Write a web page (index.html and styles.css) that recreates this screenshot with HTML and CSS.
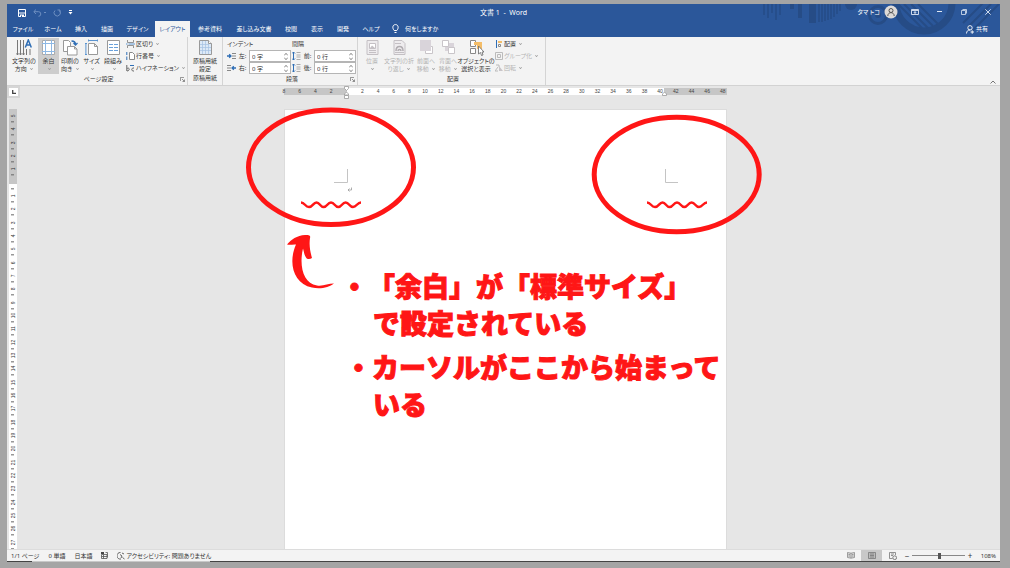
FILE: index.html
```html
<!DOCTYPE html>
<html lang="ja">
<head>
<meta charset="utf-8">
<title>文書 1 - Word</title>
<link rel="stylesheet" href="styles.css">
</head>
<body>
<div class="window">
  <header class="top">
    <svg class="decor" width="240" height="33" viewBox="760 4 240 33" aria-hidden="true">
      <g fill="none" stroke="#264c86">
        <path stroke-width="1.5" d="M764 4v11M768 4v14M772 4v9M776 4v16M780 4v11"/>
        <path stroke-width="4" d="M792 4v5M800 4v14"/>
        <path stroke-width="7" d="M812.500 4v19"/>
        <path stroke-width="1.500" d="M819 4v18M822 4v18M825 4v17M828 4v16M831 4v15M834 4v13M837 4v10M840 4v7"/>
        <circle cx="878" cy="15" r="8.500" stroke-width="3"/>
        <circle cx="924" cy="3" r="28" stroke-width="7"/>
        <path stroke-width="2" d="M898 4l24 24M904 4l24 24M911 4l22 22M918 4l20 20M967 28l24-24M972 31l27-27M963 23l20-20"/>
      </g>
      <g fill="#264c86"><circle cx="851" cy="4" r="6"/><circle cx="878" cy="15" r="3"/></g>
    </svg>
    <div class="titlebar">
      <div class="quick">
        <button class="plain" aria-label="上書き保存"><svg width="8" height="8" viewBox="0 0 8 8"><path fill="none" stroke="#fff" d="M.5.5h7v7h-7z"/><path fill="#fff" d="M1 3.500h6v1H1zM2 5.500h4V8H2z"/><path fill="#2b579a" d="M3 6.500h1V8H3z"/></svg></button>
        <button class="plain dim" aria-label="元に戻す"><svg width="13" height="8" viewBox="0 0 13 8"><path fill="none" stroke="#6e8fc0" d="M3 .5L.8 2.700 3 5M1 2.700h4.500a2.300 2.300 0 0 1 0 4.600M11 3l1 1 1-1"/></svg></button>
        <button class="plain dim" aria-label="やり直し"><svg width="8" height="8" viewBox="0 0 8 8"><path fill="none" stroke="#6e8fc0" d="M4.500 1H7v2.500M6.500 1.500A3.200 3.200 0 1 1 2 1.500"/></svg></button>
        <button class="plain" aria-label="カスタマイズ"><svg width="5" height="5" viewBox="0 0 5 5"><path fill="#fff" d="M1 0h3v1H1zM.5 2h4L2.500 4.500z"/></svg></button>
      </div>
      <h1 class="title">文書 1&nbsp; -&nbsp; Word</h1>
      <div class="account">
        <span>タマ トコ</span>
        <svg width="14" height="14" viewBox="0 0 14 14"><circle cx="7" cy="7" r="6.500" fill="#dedbd8"/><g fill="none" stroke="#555"><circle cx="7" cy="5.500" r="2"/><path d="M3.800 11c0-4.500 6.400-4.500 6.400 0"/></g></svg>
        <button class="plain" aria-label="リボンの表示オプション"><svg width="8" height="6" viewBox="0 0 8 6"><path fill="none" stroke="#dfe7f3" stroke-width=".9" d="M.5.5h7v5h-7zM1 1.500h6M4 5V2.500M2.700 4L4 2.700 5.300 4"/></svg></button>
        <button class="plain" aria-label="最小化"><svg width="6" height="6" viewBox="0 0 6 6"><path stroke="#dfe7f3" d="M0 2.500h5"/></svg></button>
        <button class="plain" aria-label="元のサイズ"><svg width="6" height="6" viewBox="0 0 6 6"><path fill="none" stroke="#dfe7f3" stroke-width=".8" d="M.5 1.500h4v4h-4zM1.500.5h4v4"/></svg></button>
        <button class="plain" aria-label="閉じる"><svg width="6" height="6" viewBox="0 0 6 6"><path stroke="#dfe7f3" stroke-width=".9" d="M.3.3l5.400 5.400M5.700.3L.3 5.700"/></svg></button>
      </div>
    </div>
    <nav class="tabs">
      <button class="tab m">ファイル</button><button class="tab m">ホーム</button><button class="tab">挿入</button><button class="tab">描画</button><button class="tab l">デザイン</button><button class="tab l active">レイアウト</button><button class="tab xl">参考資料</button><button class="tab xxl">差し込み文書</button><button class="tab">校閲</button><button class="tab">表示</button><button class="tab">開発</button><button class="tab m">ヘルプ</button>
      <button class="tell"><svg width="7" height="10" viewBox="0 0 7 10"><path fill="none" stroke="#fff" d="M2.200 6.500C.2 4.500.3.600 3.500.600S6.800 4.500 4.800 6.500zM2.500 8.500h2"/></svg>何をしますか</button>
      <button class="share"><svg width="8" height="9" viewBox="0 0 8 9"><g fill="none" stroke="#fff" stroke-width=".9"><circle cx="4" cy="2.800" r="2.200"/><path d="M.5 8.500C.6 6 2 5 4 5M4.500 7H8M6.200 5.300v3.500"/></g></svg>共有</button>
    </nav>
  </header>

  <section class="ribbon">
    <div class="group g-page">
      <div class="tools">
        <button class="big w28"><svg width="16" height="17" viewBox="0 0 16 17"><path stroke="#777" fill="none" d="M1.500 1v15M4.500 1v15M7.500 1v15M10.500 10v6M14 10v6M.5 14.500l1 1.500 1-1.500M3.500 14.500l1 1.500 1-1.500M6.500 14.500l1 1.500 1-1.500"/><path stroke="#2f6eb5" stroke-width="1.500" fill="none" d="M9.300 8.500L12.300 1l3 7.500M10.300 6h4"/></svg><span>文字列の<br>方向 <i class="ar"></i></span></button>
        <button class="big w21 on"><svg width="13" height="17" viewBox="0 0 13 17"><path fill="#fff" stroke="#aaa" d="M.5 1.500h12v14H.5z"/><path stroke="#8db8e4" d="M3.500 1v15M9.500 1v15M0 4.500h13M0 12.500h13"/></svg><span>余白<br><i class="ar"></i></span></button>
        <button class="big w22"><svg width="16" height="17" viewBox="0 0 16 17"><path fill="#fff" stroke="#999" d="M1.500 1.500h5l2 2v9h-7z"/><path fill="#fff" stroke="#999" d="M5.500 7.500h7l2.500 2.500v6H5.500zM12.500 7.500V10H15"/><path fill="none" stroke="#2f6eb5" stroke-width="1.300" d="M9.500 2c3 0 4 .8 4 3.500M11.500 4l2 2 2-2"/></svg><span>印刷の<br>向き <i class="ar"></i></span></button>
        <button class="big w21"><svg width="13" height="17" viewBox="0 0 13 17"><path fill="#fff" stroke="#999" d="M3.500 4.500h6l3 3v8h-9zM9.500 4.500v3h3"/><path fill="none" stroke="#5b94d0" d="M3 1.500h10M3.500.5v2M12.500.5v2M.9 4v12M0 4.500h2M0 15.500h2"/></svg><span>サイズ<br><i class="ar"></i></span></button>
        <button class="big w22"><svg width="13" height="17" viewBox="0 0 13 17"><path fill="#fff" stroke="#999" d="M.5 1.500h12v14H.5z"/><path stroke="#6aa1da" d="M2 5.500h4M7 5.500h4M2 8.500h4M7 8.500h4M2 11.500h4M7 11.500h4"/></svg><span>段組み<br><i class="ar"></i></span></button>
        <div class="small">
          <button><svg width="9" height="8" viewBox="0 0 9 8"><path fill="none" stroke="#888" stroke-width=".9" d="M1.500 0v2.500h6V0M1.500 8V5.500h6V8"/><path stroke="#5b94d0" d="M0 4h1.500M2.500 4H9"/></svg>区切り <i class="ar"></i></button>
          <button><svg width="9" height="8" viewBox="0 0 9 8"><path fill="#fff" stroke="#888" d="M3.500.5h3l2 2v5h-5z"/><path stroke="#2f6eb5" d="M.8 0v3M.8 4.500v3.500"/></svg>行番号 <i class="ar"></i></button>
          <button><svg width="9" height="8" viewBox="0 0 9 8"><path fill="none" stroke="#666" d="M.8 1v6M1 4.500c3-1.500 3 2.500 0 2.500M8 4C5 3.500 5 7.500 8 7"/><path stroke="#2f6eb5" d="M4 1.500h4"/></svg>ハイフネーション <i class="ar"></i></button>
        </div>
      </div>
      <div class="caption">ページ設定<svg class="launch" width="5" height="5" viewBox="0 0 5 5"><path fill="none" stroke="#777" stroke-width=".8" d="M.4 4V.4H4M2 2l2.500 2.500M4.500 2.500v2h-2"/></svg></div>
    </div>
    <div class="group g-paper">
      <div class="tools"><button class="big w35"><svg width="13" height="17" viewBox="0 0 13 17"><path fill="#dce9f7" stroke="#999" d="M.5 1.500h9l3 3v11H.5z"/><path stroke="#a3c1e3" stroke-width=".7" d="M1 5.500h9M1 8.500h11M1 11.500h11M3.500 2v13M6.500 2v13M9.500 5v10"/><path fill="#fff" stroke="#999" d="M9.500 1.500v3h3"/></svg><span>原稿用紙<br>設定</span></button></div>
      <div class="caption">原稿用紙</div>
    </div>
    <div class="group g-para">
      <div class="tools fields">
        <div class="col"><b>インデント</b>
          <div class="field"><svg width="9" height="8" viewBox="0 0 9 8"><path stroke="#888" d="M5 1.500h4M5 4h4M5 6.500h4"/><path fill="none" stroke="#2f6eb5" stroke-width="1.300" d="M0 4h4M2.200 2.200L4 4 2.200 5.800"/></svg><label for="il">左:</label><span class="spin"><input id="il" value="0 字"><i></i></span></div>
          <div class="field"><svg width="9" height="8" viewBox="0 0 9 8"><path stroke="#888" d="M0 1.500h4M0 4h4M0 6.500h4"/><path fill="none" stroke="#2f6eb5" stroke-width="1.300" d="M5 4h4M6.800 2.200L5 4l1.800 1.800"/></svg><label for="ir">右:</label><span class="spin"><input id="ir" value="0 字"><i></i></span></div>
        </div>
        <div class="col"><b>間隔</b>
          <div class="field"><svg width="9" height="8" viewBox="0 0 9 8"><path stroke="#999" stroke-width=".8" d="M4.500 .5h4M4.500 3h4M4.500 5h4M4.500 7.500h4"/><path fill="none" stroke="#2f6eb5" d="M1.500 0v8M0 1.500L1.500 0 3 1.500M0 6.500L1.500 8 3 6.500"/></svg><label for="sb">前:</label><span class="spin"><input id="sb" value="0 行"><i></i></span></div>
          <div class="field"><svg width="9" height="8" viewBox="0 0 9 8"><path stroke="#999" stroke-width=".8" d="M4.500 .5h4M4.500 3h4M4.500 5h4M4.500 7.500h4"/><path fill="none" stroke="#2f6eb5" d="M1.500 0v8M0 1.500L1.500 0 3 1.500M0 6.500L1.500 8 3 6.500"/></svg><label for="sa">後:</label><span class="spin"><input id="sa" value="0 行"><i></i></span></div>
        </div>
      </div>
      <div class="caption">段落<svg class="launch" width="5" height="5" viewBox="0 0 5 5"><path fill="none" stroke="#777" stroke-width=".8" d="M.4 4V.4H4M2 2l2.500 2.500M4.500 2.500v2h-2"/></svg></div>
    </div>
    <div class="group g-arr">
      <div class="tools">
        <button class="big w22" disabled><svg width="13" height="17" viewBox="0 0 13 17"><path fill="#eeecee" stroke="#c4c0c4" d="M1 1.500h11v14H1z"/><path fill="#fff" stroke="#c4c0c4" d="M3.500 4.500h6v5h-6z"/><path fill="#c4c0c4" d="M4 9l2-2.500L9 9z"/><path stroke="#c4c0c4" d="M3 11.500h7M3 13.500h7"/></svg><span>位置<br><i class="ar"></i></span></button>
        <button class="big w32" disabled><svg width="13" height="17" viewBox="0 0 13 17"><path fill="#eeecee" stroke="#c4c0c4" d="M1 1.500h8l3 3v11H1z"/><path stroke="#c4c0c4" d="M2 4.500h6M2 13.500h9"/><path fill="none" stroke="#b0acb0" stroke-width="1.500" d="M3 12c0-6 7-6 7 0M5 12c0-2 3-2 3 0"/></svg><span>文字列の折<br>り返し <i class="ar"></i></span></button>
        <button class="big w22" disabled><svg width="15" height="17" viewBox="0 0 15 17"><path fill="#fff" stroke="#c9c5c9" d="M6.500 7.500h7v7h-7z"/><path fill="#d9d4da" d="M1 1h11v11H1z"/></svg><span>前面へ<br>移動 <i class="ar"></i></span></button>
        <button class="big w22" disabled><svg width="15" height="17" viewBox="0 0 15 17"><path fill="#d9d4da" d="M4 4h9v8H4z"/><path fill="#fff" stroke="#c9c5c9" d="M1.500 1.500h6v6h-6zM7.500 8.500h6v6h-6z"/></svg><span>背面へ<br>移動 <i class="ar"></i></span></button>
        <button class="big w34"><svg width="15" height="17" viewBox="0 0 15 17"><path fill="#fff" stroke="#888" d="M1.500 1.500h5v6h-5zM1.500 9.500h5v5h-5z"/><path fill="#f4bd68" d="M5 3h8v7H8V6H5z"/><path fill="#fff" stroke="#666" stroke-width=".8" d="M9.500 7v8l2-1.500 1 3 1.500-.5-1-3h2z"/></svg><span>オブジェクトの<br>選択と表示</span></button>
        <div class="small">
          <button><svg width="8" height="8" viewBox="0 0 8 8"><path stroke="#2f6eb5" d="M1.500 0v8"/><path fill="#f4bd68" d="M3 1h4v2H3z"/><path fill="#fff" stroke="#888" d="M3.500 4.500h2v2h-2z"/></svg>配置 <i class="ar"></i></button>
          <button disabled><svg width="8" height="8" viewBox="0 0 8 8"><path fill="none" stroke="#bbb" d="M.5.5h7v7h-7zM2.500 2.500h3v3h-3z"/></svg>グループ化 <i class="ar"></i></button>
          <button disabled><svg width="8" height="8" viewBox="0 0 8 8"><path fill="#c8c4c8" d="M4 2l4 5H4z"/><path fill="none" stroke="#bbb" d="M3 7H0l3-4M1 1h3v2"/></svg>回転 <i class="ar"></i></button>
        </div>
      </div>
      <div class="caption">配置</div>
    </div>
    <button class="plain collapse" aria-label="リボンを折りたたむ"><svg width="6" height="4" viewBox="0 0 6 4"><path fill="none" stroke="#777" d="M.5 3.500L3 1l2.500 2.500"/></svg></button>
  </section>

  <main class="work">
    <div class="rulerbar">
      <button class="tabsel" aria-label="タブの種類"><svg width="4" height="4" viewBox="0 0 4 4"><path fill="none" stroke="#444" stroke-width="1.300" d="M.7 0v3.300H4"/></svg></button>
      <div class="hruler">
        <div class="nums"><span>8</span><span>6</span><span>4</span><span>2</span><span></span><span>2</span><span>4</span><span>6</span><span>8</span><span>10</span><span>12</span><span>14</span><span>16</span><span>18</span><span>20</span><span>22</span><span>24</span><span>26</span><span>28</span><span>30</span><span>32</span><span>34</span><span>36</span><span>38</span><span>40</span><span>42</span><span>44</span><span>46</span><span>48</span></div>
        <svg class="mark first" width="5" height="14" viewBox="0 0 5 14"><path fill="#fff" stroke="#999" stroke-width=".8" d="M.5.5h4v2l-2 2-2-2zM.5 9V8l2-2 2 2v1zM.5 9.500h4v3h-4z"/></svg>
        <svg class="mark last" width="5" height="14" viewBox="0 0 5 14"><path fill="#fff" stroke="#999" stroke-width=".8" d="M.5 9.500V8l2-2 2 2v1.500z"/></svg>
      </div>
    </div>
    <div class="docrow">
      <div class="vruler"><span>5</span><span>4</span><span>3</span><span>2</span><span>1</span><span></span><span>1</span><span>2</span><span>3</span><span>4</span><span>5</span><span>6</span><span>7</span><span>8</span><span>9</span><span>10</span><span>11</span><span>12</span><span>13</span><span>14</span><span>15</span><span>16</span><span>17</span><span>18</span><span>19</span><span>20</span><span>21</span><span>22</span><span>23</span><span>24</span><span>25</span><span>26</span><span>27</span></div>
      <article class="paper">
        <svg class="marks" width="520" height="200" viewBox="244 100 520 200" aria-hidden="true">
          <path fill="none" stroke="#c4c4c4" d="M347.500 169v13.500H334M665.500 169v13.500H678"/>
          <path fill="none" stroke="#999" stroke-width=".8" d="M351.500 187.500v2.500h-3.500M349.500 188.500L348 190l1.500 1.500"/>
          <g fill="none" stroke="#ff1616" stroke-width="5">
            <ellipse cx="331" cy="167.300" rx="82.500" ry="57.300"/>
            <ellipse cx="676.700" cy="174.500" rx="82.500" ry="57.300"/>
            <g stroke-width="2.400"><path id="wave" d="M301 202.500c4 0 4 4.500 8 4.500s4-4.500 7.500-4.500 3.500 4.500 7.200 4.500 3.600-4.500 7.300-4.500 3.600 4.500 7.300 4.500 3.600-4.500 7.300-4.500 3.600 4.500 7.400 4.500 4-4.500 8-4.500"/><use href="#wave" x="346"/></g>
          </g>
          <path fill="#ff1616" d="M287 244.500c4-5 10-9 18-9.500 3 0 6 0 5 3-1 7 0 13 2 20-2 1.500-5 1.500-6-.5-2-3-2-6-3-9-4 17 0 35 14 37 6 1 11-2 17-2-5 4-14 6-22 4-19-4-24-25-16-43-3-.5-6 1-9 0z"/>
        </svg>
        <div class="notes">
          <p class="note">・「余白」が「標準サイズ」<br><span>で設定されている</span></p>
          <p class="note second">・カーソルがここから始まって<br><span>いる</span></p>
        </div>
      </article>
    </div>
  </main>

  <footer class="status">
    <span>1/1 ページ</span><span>0 単語</span><span>日本語</span>
    <svg width="7" height="7" viewBox="0 0 7 7"><path fill="none" stroke="#555" stroke-width=".8" d="M.5 2.500h5.500v4H.5zM.5 4.500H6M2.500 2.500v4M4.500.5h2v5"/><path fill="#444" d="M0 0h3v2H0z"/></svg>
    <span class="acc"><svg width="8" height="8" viewBox="0 0 8 8"><path fill="none" stroke="#555" stroke-width=".9" d="M3.500.5A3.300 3.300 0 1 0 4 7M5 1l2 1M3 2.500l2 1.500-1 2M5.500 5.500L7.500 7"/></svg>アクセシビリティ: 問題ありません</span>
    <div class="views">
      <button class="view" aria-label="閲覧モード"><svg width="8" height="7" viewBox="0 0 8 7"><path fill="#ddd" stroke="#888" stroke-width=".8" d="M.5.5L4 1.200 7.500.5v5L4 6.200.500 5.500zM4 1v5M1.500 2.500h1.500M1.500 4h1.500M5 2.500h1.500M5 4h1.500"/></svg></button>
      <button class="view on" aria-label="印刷レイアウト"><svg width="8" height="7" viewBox="0 0 8 7"><path fill="#bbb" stroke="#777" stroke-width=".8" d="M.5.5h7v6h-7zM2 2h4M2 3.500h4M2 5h4"/></svg></button>
      <button class="view" aria-label="Web レイアウト"><svg width="8" height="8" viewBox="0 0 8 8"><path fill="none" stroke="#777" stroke-width=".8" d="M3.500 6.500h-3v-6h6V3M2 2h3M2 3.500h2"/><circle cx="5.700" cy="5.700" r="1.900" fill="#eee" stroke="#666" stroke-width=".8"/></svg></button>
      <span class="pm">−</span><input class="zoom" type="range" min="0" max="100" value="52" aria-label="ズーム"><span class="pm">+</span><span class="pct">108%</span>
    </div>
  </footer>
</div>
</body>
</html>
```

FILE: styles.css
```css
* { box-sizing: border-box; }
body {
  margin: 0;
  padding: 4px 10px 6px 7px;
  min-height: 100vh;
  display: flex;
  background: #a5a5a5;
  color: #333;
  font: 6px/8px "Noto Sans", "Noto Sans CJK JP", sans-serif;
  font-feature-settings: "palt";
  overflow: hidden;
}
button, input {
  font: inherit;
  font-feature-settings: inherit;
  color: inherit;
  border: 0;
  padding: 0;
  margin: 0;
  background: none;
  border-radius: 0;
  white-space: nowrap;
}
svg { display: block; flex: none; }
.window { flex: 1; display: flex; flex-direction: column; min-width: 0; }

/* Title bar and tabs */
.top { position: relative; background: #2b579a; color: #fff; }
.decor { position: absolute; top: 0; right: 0; }
.titlebar {
  position: relative;
  display: grid;
  grid-template-columns: 1fr auto 1fr;
  align-items: center;
  height: 17px;
}
.quick { display: flex; align-items: center; gap: 7px; padding-left: 11px; }
.title { margin: 0; font-size: 7px; font-weight: 400; line-height: 16px; }
.account { display: flex; align-items: center; justify-content: flex-end; gap: 18px; height: 15px; margin-bottom: 2px; padding-right: 9px; }
.account > span { margin-right: -14px; }
.account > svg { margin-right: -5px; }
.tabs { position: relative; display: flex; height: 16px; }
.tab { width: 26px; }
.tab.m { width: 30px; }
.tab.l { width: 35px; }
.tab:first-child { margin-left: 1px; }
.tab.xl { width: 40px; }
.tab.xxl { width: 48px; }
.tab.active { background: #f3f3f3; color: #2b579a; }
.tell, .share { display: flex; align-items: center; gap: 6px; }
.tell { margin-left: 6px; }
.share { margin-left: auto; padding-right: 12px; gap: 2px; }

/* Ribbon */
.ribbon { display: flex; height: 49px; background: #f3f3f3; border-bottom: 1px solid #d2d2d2; }
.group { display: flex; flex-direction: column; padding: 1px 0 1px 3px; border-right: 1px solid #d4d4d4; }
.g-page { width: 181px; }
.g-paper { width: 35px; padding-left: 0; }
.g-para { width: 135px; padding-left: 4px; }
.g-arr { width: 188px; }
.tools { display: flex; height: 37px; }
.big { display: flex; flex-direction: column; align-items: center; gap: 1px; padding-top: 1px; text-align: center; }
.big span { line-height: 8px; }
.big.on { background: #cdcdcd; }
.w21 { width: 21px; }
.w22 { width: 22px; }
.w28 { width: 28px; }
.w32 { width: 32px; }
.w34, .w35 { width: 34px; }
button:disabled { color: #b4b4b4; }
.ar {
  display: inline-block;
  width: 3px;
  height: 3px;
  margin: 0 0 1px 2px;
  border: solid #999;
  border-width: 0 1px 1px 0;
  transform: rotate(45deg) scale(.7);
}
.small { display: flex; flex-direction: column; padding-left: 2px; }
.small button { display: flex; align-items: center; gap: 1px; height: 12px; }
.caption { position: relative; text-align: center; line-height: 11px; }
.launch { position: absolute; right: 2px; top: 3px; }
.fields { gap: 1px; }
.col { width: 64px; }
.col b { display: block; height: 12px; line-height: 13px; font-weight: 400; }
.field { display: flex; align-items: center; height: 12px; gap: 1px; }
.field label { width: 11px; text-align: center; }
.spin { position: relative; flex: 1; height: 12px; }
.spin input { display: block; width: 100%; height: 12px; padding-left: 2px; background: #fff; border: 1px solid #b5b5b5; }
.spin i::before, .spin i::after {
  content: "";
  position: absolute;
  right: 3px;
  top: 3px;
  width: 3px;
  height: 3px;
  border: solid #888;
  border-width: 1px 0 0 1px;
  transform: rotate(45deg) scale(.7);
}
.spin i::after { top: 6px; transform: rotate(225deg) scale(.7); }
.collapse { margin: auto 4px 1px auto; }

/* Work area */
.work { flex: 1; min-height: 0; display: flex; flex-direction: column; background: #e6e6e6; }
.rulerbar { position: relative; display: flex; justify-content: center; height: 23px; padding: 2px 0 0 4px; }
.tabsel {
  position: absolute;
  left: 0;
  top: 0;
  width: 13px;
  height: 12px;
  display: flex;
  align-items: center;
  justify-content: center;
  background: #fff;
  border: 2px solid #d6d6d6;
}
.hruler {
  position: relative;
  width: 443px;
  height: 7px;
  background: linear-gradient(90deg, #c6c6c6 63px, #fff 63px calc(100% - 63px), #c6c6c6 calc(100% - 63px));
}
.nums { display: flex; justify-content: space-between; padding: 0 4px 0 0; font: 5px/7px "Liberation Sans", sans-serif; color: #444; }
.nums span { width: 0; display: flex; justify-content: center; }
.mark { position: absolute; top: -2px; }
.mark.first { left: 60px; }
.mark.last { right: 60px; }
.docrow { flex: 1; min-height: 0; display: flex; justify-content: center; position: relative; padding-left: 4px; }
.vruler {
  position: absolute;
  left: 2px;
  top: 0;
  bottom: 0;
  width: 8px;
  overflow: hidden;
  display: grid;
  grid-template-rows: repeat(33, 1fr);
  background: linear-gradient(#c6c6c6 75px, #fff 75px);
  font: 5px/8px "Liberation Sans", sans-serif;
}
.vruler span {
  display: flex;
  justify-content: center;
  align-items: center;
  writing-mode: vertical-rl;
  transform: rotate(180deg);
  background: linear-gradient(#666, #666) no-repeat center top / 3px 1px;
}
.paper { position: relative; width: 443px; background: #fff; border: 1px solid #dcdcdc; border-bottom: 0; }
.marks { position: absolute; left: -41px; top: -10px; }
.notes {
  position: absolute;
  left: 56px;
  top: 157px;
  color: #ff1616;
  font: 900 27px/37px "Noto Sans CJK JP", sans-serif;
  font-feature-settings: normal;
  text-spacing-trim: space-all;
  white-space: nowrap;
  -webkit-text-stroke: 1px #ff1616;
  stroke-linejoin: round;
}
.note { margin: 0 0 7px; }
.note span { padding-left: 32px; }
.note.second { padding-left: 4px; }
.note.second span { padding-left: 28px; }

/* Status bar */
.status {
  display: flex;
  align-items: center;
  gap: 9px;
  height: 13px;
  padding: 0 4px 1px;
  background: linear-gradient(90deg, #444 25px, #c8c8c8 25px 203px, #444 203px) no-repeat left bottom / 100% 1px, #f3f3f3;
  border-top: 1px solid #dcdcdc;
}
.acc { display: flex; align-items: center; gap: 1px; }
.views { display: flex; align-items: center; margin-left: auto; }
.view { width: 21px; height: 11px; display: flex; align-items: center; justify-content: center; }
.view.on { background: #c8c8c8; }
.pm { width: 8px; text-align: center; font-size: 8px; }
.zoom { appearance: none; width: 53px; height: 8px; margin: 0 1px; background: linear-gradient(#888, #888) no-repeat center / 100% 1px; }
.zoom::-webkit-slider-thumb { appearance: none; width: 3px; height: 6px; background: #555; }
.pct { width: 22px; text-align: right; font-size: 6px; }
```
